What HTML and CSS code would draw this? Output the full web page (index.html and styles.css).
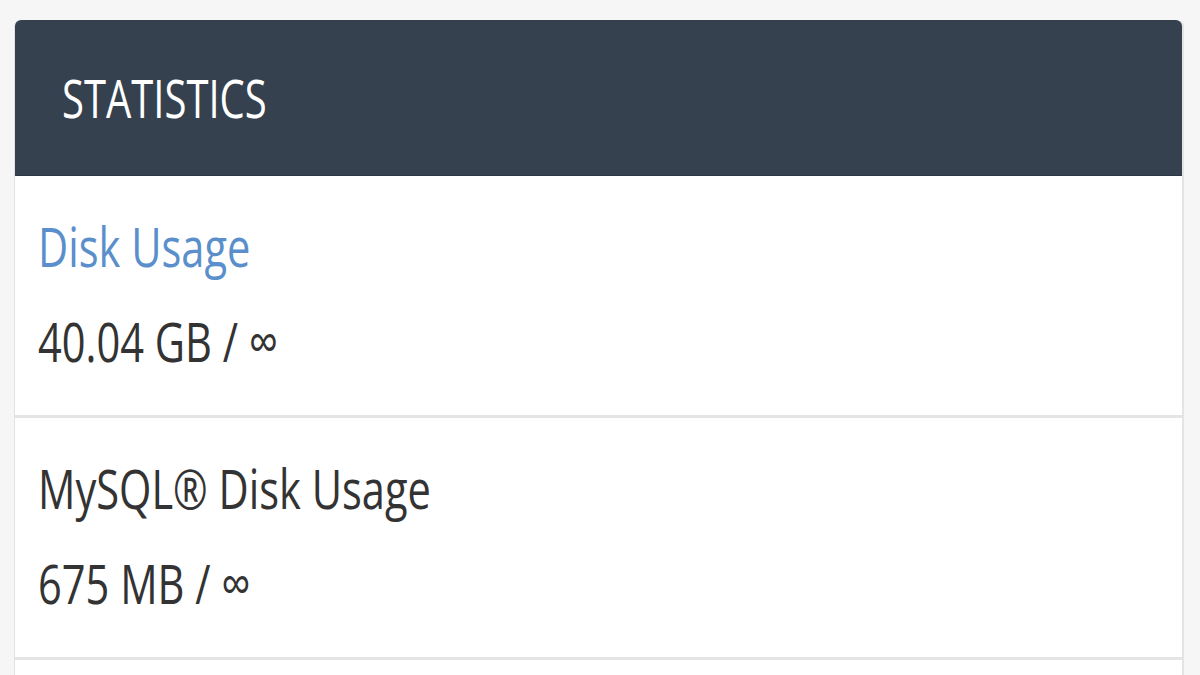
FILE: index.html
```html
<!DOCTYPE html>
<html lang="en">
<head>
    <meta charset="UTF-8">
    <title>Statistics</title>
    <link rel="stylesheet" href="styles.css">
</head>
<body>
<div class="panel">
    <div class="panel-heading">
        <span class="tall">STATISTICS</span>
    </div>
    <div class="stat">
        <div class="stat-label"><a href="#" class="tall">Disk Usage</a></div>
        <div class="stat-value"><span class="tall">40.04 GB / &infin;</span></div>
    </div>
    <div class="stat">
        <div class="stat-label"><span class="tall">MySQL&reg; Disk Usage</span></div>
        <div class="stat-value"><span class="tall">675 MB / &infin;</span></div>
    </div>
    <div class="stat-more"></div>
</div>
</body>
</html>
```

FILE: styles.css
```css
*{
    margin: 0;
    padding: 0;
}
a{
    text-decoration: none;
}
body{
    background-color: #f6f6f6;
    font-family: "Open Sans", "Liberation Sans", sans-serif;
    color: #333;
    padding: 20px 16px 0 14px;
    height: 675px;
    box-sizing: border-box;
    overflow: hidden;
}
.panel{
    background-color: #fff;
    border-left: 1px solid #e2e2e2;
    border-right: 2px solid #e4e4e4;
    border-radius: 6px 6px 0 0;
}
.panel-heading{
    background-color: #36414f;
    border-bottom: 1px solid #2c3541;
    border-radius: 6px 6px 0 0;
    height: 155px;
    padding-left: 47px;
    display: flex;
    align-items: center;
    color: #fff;
    font-size: 40px;
}
/* text is drawn taller than wide */
.tall{
    display: inline-block;
    transform: scaleY(1.33);
    transform-origin: 50% 50%;
}
.stat{
    padding: 40px 0 44px 23px;
    border-bottom: 3px solid #e4e4e4;
    font-size: 41.6px;
}
.stat-label,
.stat-value{
    line-height: 60px;
    height: 60px;
}
.stat-label a{
    color: #5b8fcb;
}
.stat-value{
    margin-top: 35px;
}
.stat-more{
    height: 40px;
}
```
